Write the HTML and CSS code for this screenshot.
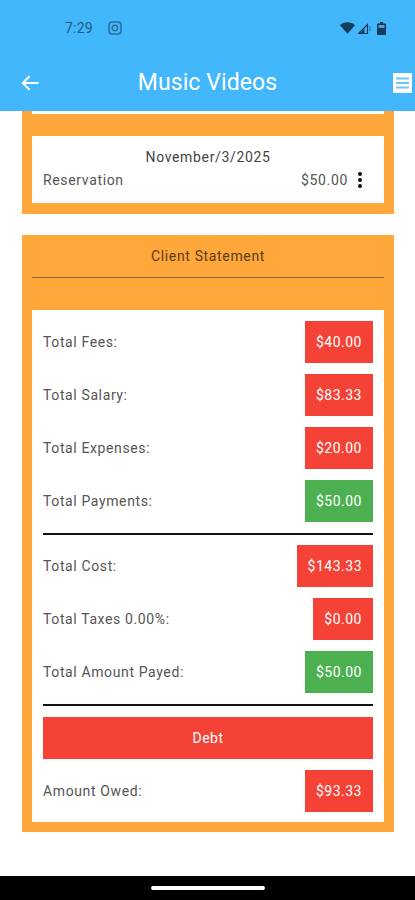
FILE: index.html
```html
<!DOCTYPE html>
<html lang="en">
<head>
<meta charset="utf-8">
<title>Music Videos</title>
<link rel="stylesheet" href="styles.css">
</head>
<body>
<div class="screen">
  <header class="header">
    <div class="status">
      <span class="time">7:29</span>
      <svg class="ig" viewBox="0 0 14 14" width="14" height="14"><rect x="1" y="1" width="12" height="12" rx="3.2" fill="none" stroke="#2b6f9e" stroke-width="1.5"/><circle cx="7" cy="7" r="2.7" fill="none" stroke="#2b6f9e" stroke-width="1.4"/></svg>
      <span class="status-right">
        <svg viewBox="0 0 15 12" width="15" height="12"><path d="M0 3.2C4-.6 11-.6 15 3.2L7.5 11.8Z" fill="#123d5c"/></svg>
        <svg viewBox="0 0 13 12" width="13" height="12"><path d="M0.5 11.5 9.5 2.5V11.5Z" fill="none" stroke="#123d5c" stroke-width="1.2"/><path d="M1.5 11.5 6.5 6.5V11.5Z" fill="#123d5c"/><path d="M12 4v5" stroke="#2b6f9e" stroke-width="1"/></svg>
        <svg class="batt" viewBox="0 0 9 13" width="9" height="13"><path d="M3 0h3v1.5h2.2a.8.8 0 0 1 .8.8v9.9a.8.8 0 0 1-.8.8H.8a.8.8 0 0 1-.8-.8V2.300a.8.8 0 0 1 .8-.8H3Z" fill="#123d5c"/><rect x="1.500" y="3" width="6" height="3" fill="#5f9cc4"/></svg>
      </span>
    </div>
    <div class="toolbar">
      <svg class="back" viewBox="0 0 18 16" width="18" height="16"><path d="M17.500 8H2M8.500 1.200 1.800 8l6.700 6.800" fill="none" stroke="#fff" stroke-width="2"/></svg>
      <h1 class="title">Music Videos</h1>
      <svg class="menu" viewBox="0 0 19 20" width="19" height="20"><rect width="19" height="20" rx="1" fill="#fff"/><path d="M3 5.500h13M3 10h13M3 14.500h13" stroke="#6cc4f8" stroke-width="2"/></svg>
    </div>
  </header>

  <main class="content">
    <section class="card card-top">
      <div class="panel panel-res">
        <div class="date">November/3/2025</div>
        <div class="res-row">
          <span>Reservation</span>
          <span class="res-end">$50.00
            <svg viewBox="0 0 6 18" width="6" height="18"><circle cx="3" cy="3" r="2" fill="#111"/><circle cx="3" cy="9" r="2" fill="#111"/><circle cx="3" cy="15" r="2" fill="#111"/></svg>
          </span>
        </div>
      </div>
    </section>

    <section class="card card-statement">
      <h2 class="card-title">Client Statement</h2>
      <div class="panel panel-list">
        <div class="row"><span>Total Fees:</span><span class="chip red">$40.00</span></div>
        <div class="row"><span>Total Salary:</span><span class="chip red">$83.33</span></div>
        <div class="row"><span>Total Expenses:</span><span class="chip red">$20.00</span></div>
        <div class="row"><span>Total Payments:</span><span class="chip green">$50.00</span></div>
        <hr class="rule rule-tight">
        <div class="row"><span>Total Cost:</span><span class="chip red">$143.33</span></div>
        <div class="row"><span>Total Taxes 0.00%:</span><span class="chip red">$0.00</span></div>
        <div class="row"><span>Total Amount Payed:</span><span class="chip green">$50.00</span></div>
        <hr class="rule">
        <div class="debt">Debt</div>
        <div class="row"><span>Amount Owed:</span><span class="chip red">$93.33</span></div>
      </div>
    </section>
  </main>

  <footer class="navbar"><span class="pill"></span></footer>
</div>
</body>
</html>
```
FILE: styles.css
```css
* { box-sizing: border-box; }
html, body { margin: 0; padding: 0; }
body { font-family: Roboto, "Liberation Sans", sans-serif; background: #fff; color: #555; }
.screen { width: 415px; height: 900px; display: flex; flex-direction: column; overflow: hidden; background: #fff; }

.header { height: 111px; flex: none; background: #42b7fb; }
.status { height: 57px; display: flex; align-items: center; padding: 0 29px 1px 65px; }
.time { font-size: 14px; color: #1f5d87; width: 43px; letter-spacing: 0.2px; }
.ig { flex: none; }
.status-right { margin-left: auto; display: flex; align-items: center; gap: 3px; }
.batt { margin-left: 3px; }
.toolbar { height: 50px; display: flex; align-items: center; position: relative; padding: 0 3px 0 21px; justify-content: space-between; }
.title { position: absolute; left: 0; right: 0; text-align: center; margin: 0; font-size: 23px; font-weight: 400; color: #fff; letter-spacing: 0.1px; }
.back, .menu { position: relative; }
.back { margin-top: 1px; }
.menu { margin-top: 1px; }

.content { flex: 1; display: flex; flex-direction: column; gap: 21px; padding: 0 21px 0 22px; }
.card { background: #ffa73b; padding: 0 10px; }
.card-top { height: 103px; padding-top: 25px; position: relative; }
.card-top::before { content: ""; position: absolute; left: 10px; right: 10px; top: 0; height: 3px; background: #fff; }
.panel { background: #fff; }
.panel-res { height: 67px; padding: 13px 11px 0; font-size: 14px; }
.date { text-align: center; color: #444; font-size: 14px; line-height: 16px; letter-spacing: 0.65px; }
.res-row { display: flex; justify-content: space-between; align-items: center; height: 22px; margin-top: 4px; color: #555; letter-spacing: 0.65px; }
.res-end { display: flex; align-items: center; gap: 9px; padding-right: 10px; }

.card-statement { height: 597px; }
.card-title { margin: 0; height: 43px; line-height: 43px; text-align: center; font-size: 14px; font-weight: 400; color: #5a3d14; letter-spacing: 0.65px; border-bottom: 1px solid #7f6a45; }
.panel-list { margin-top: 32px; height: 512px; padding: 11px; display: flex; flex-direction: column; gap: 11px; }
.row { display: flex; justify-content: space-between; align-items: center; height: 42px; font-size: 14px; letter-spacing: 0.62px; color: #555; flex: none; }
.chip { height: 42px; padding: 0 11px; display: flex; align-items: center; color: #fff; font-size: 14px; letter-spacing: 0.5px; }
.red { background: #f44336; }
.green { background: #4caf50; }
.rule { height: 2px; margin: 0; border: 0; background: #111; flex: none; }
.rule-tight { margin-bottom: -1px; }
.debt { height: 42px; background: #f44336; color: #fff; display: flex; align-items: center; justify-content: center; font-size: 14px; flex: none; letter-spacing: 0.5px; }

.navbar { height: 24px; flex: none; background: #000; display: flex; align-items: center; justify-content: center; }
.pill { width: 114px; height: 4px; border-radius: 2px; background: #fff; }
```
